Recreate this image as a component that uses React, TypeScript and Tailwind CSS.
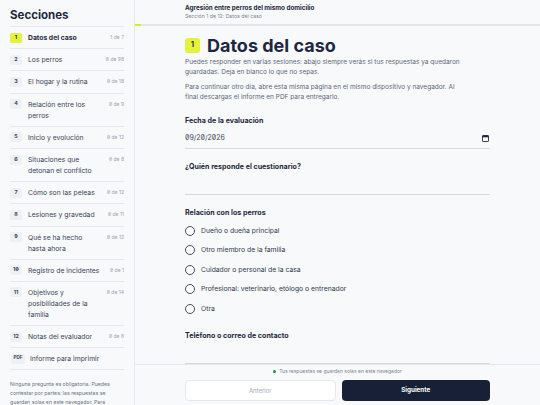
import React from 'react';

const sections = [
  { n: '1', label: 'Datos del caso', count: '1 de 7', active: true },
  { n: '2', label: 'Los perros', count: '0 de 98' },
  { n: '3', label: 'El hogar y la rutina', count: '0 de 18' },
  { n: '4', label: 'Relación entre los\nperros', count: '0 de 9' },
  { n: '5', label: 'Inicio y evolución', count: '0 de 12' },
  { n: '6', label: 'Situaciones que\ndetonan el conflicto', count: '0 de 8' },
  { n: '7', label: 'Cómo son las peleas', count: '0 de 12' },
  { n: '8', label: 'Lesiones y gravedad', count: '0 de 11' },
  { n: '9', label: 'Qué se ha hecho\nhasta ahora', count: '0 de 12' },
  { n: '10', label: 'Registro de incidentes', count: '0 de 1' },
  { n: '11', label: 'Objetivos y\nposibilidades de la\nfamilia', count: '0 de 14' },
  { n: '12', label: 'Notas del evaluador', count: '0 de 6' },
];

const relaciones = [
  'Dueño o dueña principal',
  'Otro miembro de la familia',
  'Cuidador o personal de la casa',
  'Profesional: veterinario, etólogo o entrenador',
  'Otra',
];

function Sidebar() {
  return (
    <aside className="w-[135px] shrink-0 overflow-hidden border-r border-[#e4e7ec] bg-[#f8f9fb] px-[10px]">
      <h2 className="border-b border-[#e4e7ec] pt-[9px] pb-[4px] text-[11.5px] font-bold leading-[13px] text-[#1d2840]">
        Secciones
      </h2>
      <ul>
        {sections.map((s) => (
          <li key={s.n} className="flex items-start border-b border-[#e4e7ec] py-[5.1px]">
            <span
              className={`mt-[0.5px] flex h-[10px] w-[12px] shrink-0 items-center justify-center rounded-[2px] text-[5.3px] font-bold ${
                s.active ? 'bg-[#e3f23a] text-[#1d2840]' : 'bg-[#eef0f4] text-[#3a4457]'
              }`}
            >
              {s.n}
            </span>
            <span
              className={`ml-[6px] flex-1 whitespace-pre-line text-[6.8px] leading-[11px] ${
                s.active ? 'font-bold text-[#1d2840]' : 'text-[#3a4457]'
              }`}
            >
              {s.label}
            </span>
            <span className="ml-[3px] shrink-0 text-[5px] leading-[11px] text-[#9aa2b1]">{s.count}</span>
          </li>
        ))}
        <li className="flex items-center border-b border-[#e4e7ec] py-[5.1px]">
          <span className="ml-[1px] flex h-[10px] w-[14px] shrink-0 items-center justify-center rounded-[2px] bg-[#eef0f4] text-[4.5px] font-bold text-[#3a4457]">
            PDF
          </span>
          <span className="ml-[5px] text-[6.8px] leading-[11px] text-[#3a4457]">Informe para imprimir</span>
        </li>
      </ul>
      <p className="pt-[10px] text-[5.2px] leading-[9px] text-[#6b7485]">
        Ninguna pregunta es obligatoria. Puedes contestar por partes: las respuestas se guardan solas en este navegador. Para
        retomar otro día, vuelve a abrir esta página.
      </p>
    </aside>
  );
}

function CalendarIcon() {
  return (
    <svg width="7" height="7" viewBox="0 0 7 7" className="text-[#1d2840]">
      <rect x="0.5" y="0.5" width="6" height="6" rx="0.6" fill="none" stroke="currentColor" strokeWidth="0.9" />
      <rect x="0.5" y="0.5" width="6" height="1.8" fill="currentColor" />
    </svg>
  );
}

function Field({ label, children }: { label: string; children?: React.ReactNode }) {
  return (
    <div className="mb-[13px]">
      <div className="mb-[3px] text-[7.1px] font-bold leading-[10px] text-[#1d2840]">{label}</div>
      {children ?? <div className="h-[20px] border-b border-[#d5d9e1]" />}
    </div>
  );
}

export default function App() {
  return (
    <div className="flex h-screen w-full overflow-hidden bg-[#f8f9fb] font-['Inter','Noto_Sans',sans-serif] [font-feature-settings:'zero']">
      <Sidebar />
      <main className="flex min-w-0 flex-1 flex-col">
        <header className="shrink-0">
          <div className="mx-auto h-[24px] w-[305px] pt-[4px]">
            <div className="text-[6.3px] font-bold leading-[8px] text-[#1d2840]">Agresión entre perros del mismo domicilio</div>
            <div className="text-[5.2px] leading-[8px] text-[#7a8394]">Sección 1 de 12: Datos del caso</div>
          </div>
          <div className="h-[2px] w-full bg-[#e3e7ed]">
            <div className="h-full w-[1.5%] bg-[#d9ec2c]" />
          </div>
        </header>

        <div className="min-h-0 flex-1 overflow-hidden">
          <div className="mx-auto w-[305px] pt-[12px]">
            <div className="flex items-center">
              <span className="flex h-[15px] w-[15px] items-center justify-center rounded-[3px] bg-[#e3f23a] text-[7px] font-bold text-[#1d2840]">
                1
              </span>
              <h1 className="ml-[7px] text-[18px] font-bold leading-[15px] text-[#1d2840]">Datos del caso</h1>
            </div>
            <p className="mt-[4px] w-[282px] text-[6.5px] leading-[10px] text-[#5c6678]">
              Puedes responder en varias sesiones: abajo siempre verás si tus respuestas ya quedaron guardadas. Deja en blanco lo que no sepas.
            </p>
            <p className="mt-[5px] w-[282px] text-[6.5px] leading-[10px] text-[#5c6678]">
              Para continuar otro día, abre esta misma página en el mismo dispositivo y navegador. Al final descargas el informe en PDF para entregarlo.
            </p>

            <div className="mt-[14px]">
              <Field label="Fecha de la evaluación">
                <div className="flex h-[20px] items-center justify-between border-b border-[#d5d9e1] pr-[1px]">
                  <span className="text-[7px] text-[#3d4657]">09/20/2026</span>
                  <CalendarIcon />
                </div>
              </Field>
              <Field label="¿Quién responde el cuestionario?" />
              <div className="mb-[12px]">
                <div className="mb-[3px] text-[7.1px] font-bold leading-[10px] text-[#1d2840]">Relación con los perros</div>
                {relaciones.map((r) => (
                  <label key={r} className="flex h-[19.5px] items-center">
                    <span className="h-[10px] w-[10px] rounded-full border border-[#434c5e] bg-white" />
                    <span className="ml-[6px] text-[6.8px] text-[#2f394b]">{r}</span>
                  </label>
                ))}
              </div>
              <Field label="Teléfono o correo de contacto" />
            </div>
          </div>
        </div>

        <footer className="shrink-0 border-t border-[#e4e7ec] bg-[#f8f9fb] pt-[3px] pb-[4px]">
          <div className="flex h-[6px] items-center justify-center">
            <span className="h-[3px] w-[3px] rounded-full bg-[#16934a]" />
            <span className="ml-[3px] text-[5px] leading-[6px] text-[#7a8394]">Tus respuestas se guardan solas en este navegador</span>
          </div>
          <div className="mx-auto mt-[6px] flex w-[305px] gap-[6px]">
            <button className="h-[21px] flex-1 rounded-[4px] border border-[#e4e7ec] bg-white text-[6px] text-[#a3aab7]">
              Anterior
            </button>
            <button className="h-[21px] flex-1 rounded-[4px] bg-[#172037] text-[6.3px] font-bold text-white">Siguiente</button>
          </div>
        </footer>
      </main>
    </div>
  );
}
